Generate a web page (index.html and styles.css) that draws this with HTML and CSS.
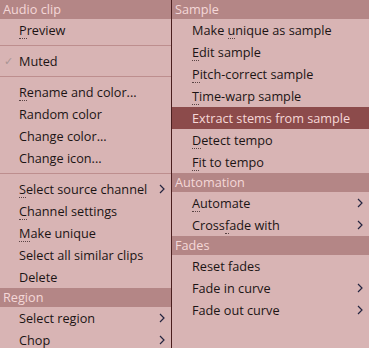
FILE: index.html
```html
<!DOCTYPE html>
<html lang="en">
  <head>
    <meta charset="UTF-8" />
    <title>Clip menu</title>
    <link rel="stylesheet" href="styles.css">
  </head>
  <body>
    <div class="menu">
      <div class="col left">
        <div class="head">Audio clip</div>
        <div class="item"><span class="key">P</span>review</div>
        <div class="sep"></div>
        <div class="item"><span class="check">&#10003;</span>Muted</div>
        <div class="sep"></div>
        <div class="item"><span class="key">R</span>ename and color...</div>
        <div class="item">Random color</div>
        <div class="item">Change color...</div>
        <div class="item">Change icon...</div>
        <div class="sep"></div>
        <div class="item sub"><span><span class="key">S</span>elect source channel</span><svg class="arrow" width="6" height="10" viewBox="0 0 6 10"><polyline points="1,1 5,5 1,9" /></svg></div>
        <div class="item"><span class="key">C</span>hannel settings</div>
        <div class="item"><span class="key">M</span>ake unique</div>
        <div class="item">Select all similar clips</div>
        <div class="item">Delete</div>
        <div class="head">Region</div>
        <div class="item sub"><span>Select region</span><svg class="arrow" width="6" height="10" viewBox="0 0 6 10"><polyline points="1,1 5,5 1,9" /></svg></div>
        <div class="item sub"><span>Chop</span><svg class="arrow" width="6" height="10" viewBox="0 0 6 10"><polyline points="1,1 5,5 1,9" /></svg></div>
      </div>
      <div class="col right">
        <div class="head">Sample</div>
        <div class="item">Make <span class="key">u</span>nique as sample</div>
        <div class="item"><span class="key">E</span>dit sample</div>
        <div class="item"><span class="key">P</span>itch-correct sample</div>
        <div class="item"><span class="key">T</span>ime-warp sample</div>
        <div class="item active">Extract stems from sample</div>
        <div class="item"><span class="key">D</span>etect tempo</div>
        <div class="item"><span class="key">F</span>it to tempo</div>
        <div class="head">Automation</div>
        <div class="item sub"><span><span class="key">A</span>utomate</span><svg class="arrow" width="6" height="10" viewBox="0 0 6 10"><polyline points="1,1 5,5 1,9" /></svg></div>
        <div class="item sub"><span>Cross<span class="key">f</span>ade with</span><svg class="arrow" width="6" height="10" viewBox="0 0 6 10"><polyline points="1,1 5,5 1,9" /></svg></div>
        <div class="head">Fades</div>
        <div class="item">Reset fades</div>
        <div class="item sub"><span>Fade in curve</span><svg class="arrow" width="6" height="10" viewBox="0 0 6 10"><polyline points="1,1 5,5 1,9" /></svg></div>
        <div class="item sub"><span>Fade out curve</span><svg class="arrow" width="6" height="10" viewBox="0 0 6 10"><polyline points="1,1 5,5 1,9" /></svg></div>
      </div>
    </div>
  </body>
</html>
```

FILE: styles.css
```css
/* Kontextmenü eines Audio-Clips */
body {
    margin: 0;
    background-color: #d8b4b4;
    font-family: "Open Sans", "Noto Sans", sans-serif;
    font-size: 12.7px;
    color: #1c1414;
}

.menu {
    display: flex;
    height: 348px;
    overflow: hidden;
}

.col {
    display: flex;
    flex-direction: column;
}

.left {
    width: 171px;
}

.right {
    flex: 1;
    border-left: 1px solid #4a1e1e;
}

.head {
    height: 19px;
    line-height: 19px;
    padding-left: 3px;
    background-color: #b48686;
    color: #f4d8d8;
    flex-shrink: 0;
}

.item {
    position: relative;
    height: 22px;
    line-height: 22px;
    padding-left: 19px;
    padding-right: 6px;
    flex-shrink: 0;
    white-space: nowrap;
}

.right .item {
    padding-left: 20px;
}

.item.sub {
    display: flex;
    justify-content: space-between;
    align-items: center;
}

.item.active {
    background-color: #8c4b4b;
    color: #f6d8d8;
}

.sep {
    height: 9px;
    flex-shrink: 0;
    display: flex;
    align-items: center;
}

.sep::after {
    content: "";
    flex: 1;
    height: 1px;
    background-color: #bd8e8e;
}

.key {
    display: inline-block;
    line-height: 15px;
    border-bottom: 1px dotted #5a4444;
}

.check {
    position: absolute;
    left: 4px;
    color: #a89494;
    font-size: 11px;
}

.arrow {
    flex-shrink: 0;
}

.arrow polyline {
    fill: none;
    stroke: #252540;
    stroke-width: 1.2;
}
```
